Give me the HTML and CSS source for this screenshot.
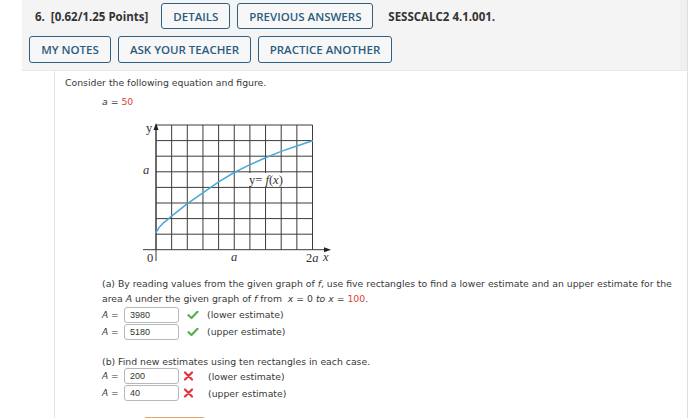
FILE: index.html
```html
<!DOCTYPE html>
<html>
<head>
<meta charset="utf-8">
<link rel="stylesheet" href="styles.css">
</head>
<body>
<div class="q">
  <div class="qhead">
    <div class="row row1">
      <span class="qnum">6.&nbsp; [0.62/1.25 Points]</span>
      <span class="btn btn-details">DETAILS</span>
      <span class="btn btn-prev">PREVIOUS ANSWERS</span>
      <span class="qcode">SESSCALC2 4.1.001.</span>
    </div>
    <div class="row row2">
      <span class="btn btn-notes">MY NOTES</span>
      <span class="btn btn-ask">ASK YOUR TEACHER</span>
      <span class="btn btn-practice">PRACTICE ANOTHER</span>
    </div>
  </div>
  <div class="qbody">
    <p class="intro">Consider the following equation and figure.</p>
    <p class="given"><i>a</i> = <span class="red">50</span></p>
    <svg class="graph" width="200" height="152" viewBox="0 0 200 152">
      <g class="grid">
        <line x1="21" y1="8" x2="21" y2="132.7"/>
        <line x1="36.65" y1="8" x2="36.65" y2="132.7"/>
        <line x1="52.3" y1="8" x2="52.3" y2="132.7"/>
        <line x1="67.95" y1="8" x2="67.95" y2="132.7"/>
        <line x1="83.6" y1="8" x2="83.6" y2="132.7"/>
        <line x1="99.25" y1="8" x2="99.25" y2="132.7"/>
        <line x1="114.9" y1="8" x2="114.9" y2="132.7"/>
        <line x1="130.55" y1="8" x2="130.55" y2="132.7"/>
        <line x1="146.2" y1="8" x2="146.2" y2="132.7"/>
        <line x1="161.85" y1="8" x2="161.85" y2="132.7"/>
        <line x1="177.5" y1="8" x2="177.5" y2="132.7"/>
        <line x1="21" y1="8" x2="177.5" y2="8"/>
        <line x1="21" y1="23.6" x2="177.5" y2="23.6"/>
        <line x1="21" y1="39.2" x2="177.5" y2="39.2"/>
        <line x1="21" y1="54.8" x2="177.5" y2="54.8"/>
        <line x1="21" y1="70.4" x2="177.5" y2="70.4"/>
        <line x1="21" y1="86" x2="177.5" y2="86"/>
        <line x1="21" y1="101.6" x2="177.5" y2="101.6"/>
        <line x1="21" y1="117.2" x2="177.5" y2="117.2"/>
      </g>
      <g class="axes">
        <line x1="21" y1="144" x2="21" y2="10"/>
        <line x1="8" y1="132.7" x2="192" y2="132.7"/>
        <polygon points="21,6 18.5,13 23.5,13"/>
        <polygon points="196,132.7 189,130.2 189,135.2"/>
      </g>
      <polyline class="curve" points="21,115.5 24,110.6 28.8,105.6 36.65,99.2 52.3,86.7 67.95,75.8 83.6,64.8 99.25,55.5 114.9,47.7 130.55,40.7 146.2,34.4 161.85,29.0 177.5,23.8"/>
      <rect class="lblbg" x="113" y="56" width="42" height="13.5"/>
      <text class="lbl mid" x="114" y="66.5">y= <tspan class="it">f</tspan>(<tspan class="it">x</tspan>)</text>
      <text class="lbl mid" x="11" y="15">y</text>
      <text class="lbl it big" x="8" y="57">a</text>
      <text class="lbl big" x="12" y="145">0</text>
      <text class="lbl it big" x="96" y="144">a</text>
      <text class="lbl big" x="171" y="144.5">2<tspan class="it">a</tspan></text>
      <text class="lbl it mid" x="188" y="144">x</text>
    </svg>
    <p class="part parta">(a) By reading values from the given graph of <i>f</i>, use five rectangles to find a lower estimate and an upper estimate for the<br>area <i>A</i> under the given graph of <i>f</i> from&nbsp; <i>x</i> = 0 <i>to x</i> = <span class="red">100</span>.</p>
    <div class="ans">
      <span class="alabel"><i>A</i> =</span><span class="box">3980</span>
      <svg class="mark" width="12" height="10" viewBox="0 0 12 10"><path class="ok" d="M1.5 5.2 L4.5 8 L10.5 1.8"/></svg>
      <span class="note">(lower estimate)</span>
    </div>
    <div class="ans">
      <span class="alabel"><i>A</i> =</span><span class="box">5180</span>
      <svg class="mark" width="12" height="10" viewBox="0 0 12 10"><path class="ok" d="M1.5 5.2 L4.5 8 L10.5 1.8"/></svg>
      <span class="note">(upper estimate)</span>
    </div>
    <p class="part partb">(b) Find new estimates using ten rectangles in each case.</p>
    <div class="ans">
      <span class="alabel"><i>A</i> =</span><span class="box">200</span>
      <svg class="mark markx" width="12" height="10" viewBox="0 0 12 10"><path class="bad" d="M2 1.5 L9 8.5 M9 1.5 L2 8.5"/></svg>
      <span class="note">(lower estimate)</span>
    </div>
    <div class="ans">
      <span class="alabel"><i>A</i> =</span><span class="box">40</span>
      <svg class="mark markx" width="12" height="10" viewBox="0 0 12 10"><path class="bad" d="M2 1.5 L9 8.5 M9 1.5 L2 8.5"/></svg>
      <span class="note">(upper estimate)</span>
    </div>
    <div class="nextbar"></div>
  </div>
</div>
</body>
</html>
```

FILE: styles.css
```css
html, body {
  margin: 0;
  padding: 0;
  background: #ffffff;
  overflow: hidden;
}
body {
  width: 700px;
  height: 418px;
}
.q {
  margin-left: 22px;
  width: 665px;
  border-right: 1px solid #dedede;
  min-height: 418px;
}
.qhead {
  background: #f4f4f4;
  padding: 3px 0 7px 0;
  border-bottom: 1px solid #e9e9e9;
  box-shadow: inset -7px 0 0 #efefef;
}
.row {
  display: flex;
  align-items: center;
  font-family: "Open Sans", "Liberation Sans", sans-serif;
  font-weight: 600;
  font-size: 11.5px;
}
.row1 {
  height: 26px;
  padding-left: 13px;
}
.row2 {
  height: 27px;
  margin-top: 7px;
  padding-left: 7px;
  gap: 7px;
}
.qnum {
  color: #333333;
  font-weight: 700;
  margin-right: 13px;
}
.qcode {
  color: #333333;
  font-weight: 700;
  margin-left: 15px;
}
.btn {
  box-sizing: border-box;
  height: 100%;
  display: flex;
  align-items: center;
  justify-content: center;
  border: 1.5px solid #2f5f82;
  border-radius: 3px;
  color: #2b5b80;
  background: #f7f7f7;
  letter-spacing: 0;
}
.btn-details { width: 69px; }
.btn-prev { width: 136px; margin-left: 7px; }
.btn-notes { width: 82px; }
.btn-ask { width: 133px; }
.btn-practice { width: 134px; }

.qbody {
  margin-left: 32px;
  border-left: 1px solid #e6e6e6;
  padding-left: 10px;
  padding-top: 5px;
  font-family: "DejaVu Sans", Verdana, sans-serif;
  font-size: 9.3px;
  color: #383838;
  min-height: 342px;
}
.qbody p { margin: 0; }
.intro { line-height: 13px; }
.given {
  margin-top: 6px !important;
  padding-left: 37px;
  line-height: 13px;
}
.red { color: #d8423a; }
.graph {
  display: block;
  margin-left: 70px;
  margin-top: 9px;
}
.grid line {
  stroke: #3c3c3c;
  stroke-width: 1;
}
.axes line {
  stroke: #3a3a3a;
  stroke-width: 1;
}
.axes polygon { fill: #222; }
.curve {
  fill: none;
  stroke: #4aa8d8;
  stroke-width: 1.5;
  stroke-linejoin: round;
  stroke-linecap: round;
}
.lblbg { fill: #ffffff; }
.lbl {
  font-family: "Liberation Serif", "DejaVu Serif", serif;
  font-size: 10.5px;
  fill: #333;
}
.lbl.mid { font-size: 12.5px; }
.lbl.big { font-size: 12.5px; }
.it { font-style: italic; }
.part {
  padding-left: 37px;
  line-height: 15px;
}
.parta { margin-top: 7px !important; }
.ans {
  display: flex;
  align-items: center;
  height: 17px;
  padding-left: 37px;
}
.alabel {
  width: 22px;
  font-size: 9px;
}
.box {
  box-sizing: border-box;
  width: 55px;
  height: 16px;
  border: 1px solid #b8b8b8;
  border-radius: 3px;
  padding-left: 5px;
  font-family: "Liberation Sans", Arial, sans-serif;
  font-size: 9px;
  line-height: 14px;
  color: #333;
  background: #fff;
}
.mark {
  margin-left: 8px;
  margin-right: 8px;
}
.markx {
  margin-left: 4px;
  margin-right: 13px;
}
.ok {
  fill: none;
  stroke: #5aad4e;
  stroke-width: 2.2;
  stroke-linecap: round;
  stroke-linejoin: round;
}
.bad {
  fill: none;
  stroke: #e0333e;
  stroke-width: 2.2;
  stroke-linecap: round;
}
.note { color: #383838; }
.partb {
  margin-top: 15.5px !important;
  line-height: 12px;
}
.nextbar {
  margin-top: 15px;
  margin-left: 80px;
  width: 59px;
  height: 0;
  border-top: 2px solid #e8a76a;
}
```
